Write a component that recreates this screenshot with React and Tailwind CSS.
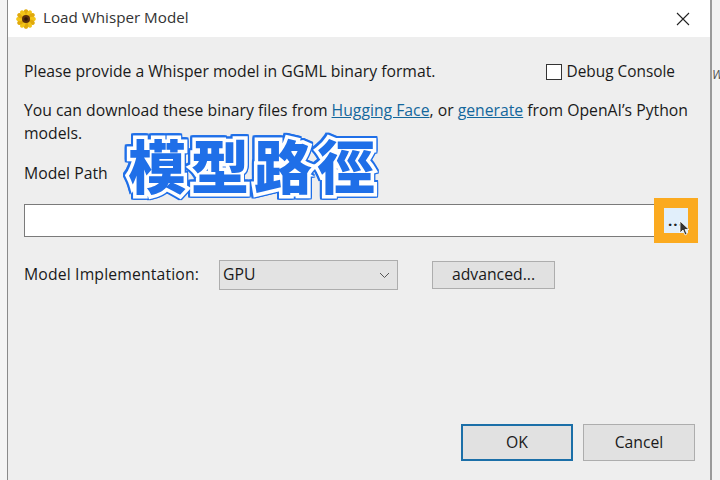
const Sunflower = () => {
  const petals = [0, 30, 60, 90, 120, 150, 180, 210, 240, 270, 300, 330];
  return (
    <svg width="20" height="20" viewBox="0 0 20 20" className="shrink-0">
      {petals.map((a) => (
        <ellipse key={a} cx="10" cy="3.6" rx="2.3" ry="3.4" fill={a % 60 === 0 ? '#e0a90c' : '#f2c417'} transform={`rotate(${a} 10 10)`} />
      ))}
      <circle cx="10" cy="10" r="4" fill="#5a2f0c" />
      <circle cx="10" cy="10" r="1.8" fill="#2f1605" />
    </svg>
  );
};

export default function App() {
  return (
    <div className="w-[720px] h-[480px] overflow-hidden flex bg-[#f0f0f0] text-[#1a1a1a] font-['Open_Sans','Noto_Sans',sans-serif] text-[15.75px]">
      <div className="w-[8px] bg-[#f4f4f4] border-r border-[#8a8a8a]" />

      {/* Dialog */}
      <div className="relative w-[704px] h-full flex flex-col bg-[#eeeeee] border-r-2 border-[#9a9a9a]">
        <div className="h-[37px] bg-white flex items-center pl-[8px] pr-[20px] gap-[6px] shrink-0">
          <Sunflower />
          <span className="text-[#333] text-[15.2px] pl-px -mt-[3px]">Load Whisper Model</span>
          <svg width="14" height="14" viewBox="0 0 14 14" className="ml-auto mt-px" stroke="#222" strokeWidth="1.1">
            <path d="M1 1 L13 13 M13 1 L1 13" />
          </svg>
        </div>

        <div className="flex-1 flex flex-col pl-[16px] pr-[13px]">
          <div className="flex items-center justify-between mt-[24px] h-[22px]">
            <span>Please provide a Whisper model in GGML binary format.</span>
            <label className="flex items-center gap-[4px] mr-[22px]">
              <span className="w-[16px] h-[16px] border border-[#333] bg-white" />
              <span className="text-[15.4px]">Debug Console</span>
            </label>
          </div>

          <p className="mt-[16px] leading-[23px]">
            You can download these binary files from <a className="text-[#14679c] underline">Hugging Face</a>, or <a className="text-[#14679c] underline">generate</a> from OpenAI’s Python models.
          </p>

          <div className="mt-[18px] h-[22px] flex items-center">Model Path</div>

          <div className="mt-[19px] h-[33px] flex">
            <div className="flex-1 bg-white border border-[#7a7a7a]" />
          </div>

          <div className="mt-[23px] flex items-center">
            <span className="w-[195px] tracking-[0.15px]">Model Implementation:</span>
            <div className="w-[179px] h-[30px] bg-[#e3e3e3] border border-[#adadad] flex items-center justify-between pl-[3px] pr-[7px]">
              <span>GPU</span>
              <svg width="11" height="7" viewBox="0 0 11 7" fill="none" stroke="#555" strokeWidth="1">
                <path d="M1 1 L5.5 5.5 L10 1" />
              </svg>
            </div>
            <button className="ml-[34px] w-[123px] h-[28px] bg-[#e1e1e1] border border-[#adadad]">advanced...</button>
          </div>

          <div className="mt-auto mb-[19px] flex justify-end gap-[10px] pr-[2px]">
            <button className="w-[112px] h-[37px] bg-[#e1e1e1] border-2 border-[#1b6fa8]">OK</button>
            <button className="w-[112px] h-[37px] bg-[#e1e1e1] border border-[#adadad]">Cancel</button>
          </div>
        </div>

        {/* Video caption over the dialog */}
        <span className="absolute left-[120px] top-[128px] text-[58px] leading-[72px] font-black text-[#1f6fe8] tracking-[5px] font-['Noto_Sans_CJK_TC',sans-serif] [-webkit-text-stroke:7px_#ffffff] [paint-order:stroke_fill] [filter:drop-shadow(1.2px_0_0_#1f6fe8)_drop-shadow(-1.2px_0_0_#1f6fe8)_drop-shadow(0_1.2px_0_#1f6fe8)_drop-shadow(0_-1.2px_0_#1f6fe8)]">
          模型路徑
        </span>

        {/* Orange highlight round the browse button */}
        <div className="absolute left-[646px] top-[198px] w-[44px] h-[45px] border-[10px] border-[#fbaa1f] bg-[#e1effb] flex items-center justify-center">
          <span className="text-[15px] leading-none font-bold tracking-[1px] text-[#222] -mt-[1px]">...</span>
          <svg width="11" height="16" viewBox="0 0 11 16" className="absolute left-[15px] top-[12px]">
            <path d="M1 1 L1 13 L4 10 L6 15 L8 14 L6 9.5 L10 9.5 Z" fill="#333" stroke="#fff" strokeWidth="0.8" />
          </svg>
        </div>
      </div>

      <div className="flex-1 bg-[#f2f2f2] pt-[65px] text-[13px] italic text-[#555] overflow-hidden">Wh</div>
    </div>
  );
}
